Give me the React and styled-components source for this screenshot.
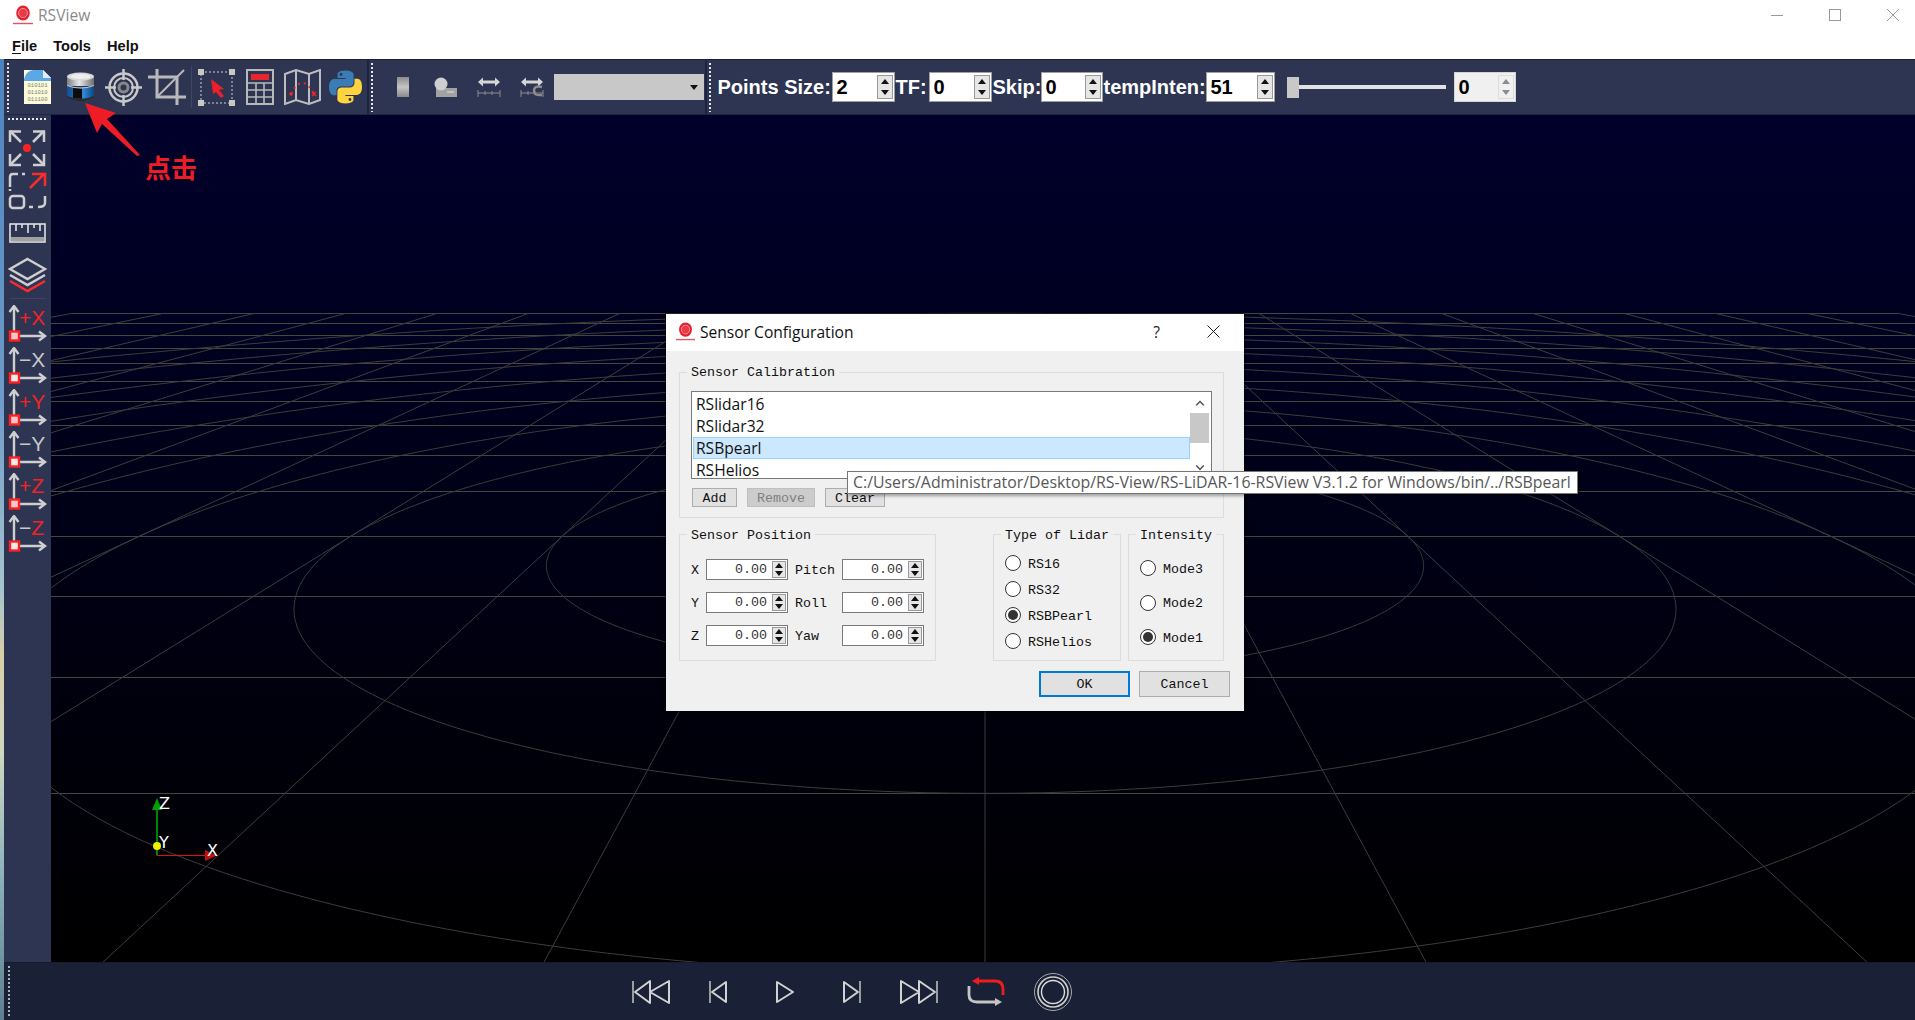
import React from "react";
import styled, { createGlobalStyle } from "styled-components";

const Global = createGlobalStyle`
  html, body { margin: 0; padding: 0; width: 1915px; height: 1020px; overflow: hidden; background: #fff; }
  #root { width: 1915px; height: 1020px; }
  * { box-sizing: border-box; }
`;

const Page = styled.div`
  position: relative; width: 1915px; height: 1020px; display: flex; flex-direction: column; overflow: hidden;
  font-family: "Liberation Sans", Arial, sans-serif;
`;
const TitleBar = styled.div`
  height: 30px; display: flex; align-items: center; padding-left: 13px; background: #fff;
`;
const AppName = styled.span`
  margin-left: 5px; font: 15.6px "Open Sans", sans-serif; color: #8a8a8a;
`;
const WindowButtons = styled.div`margin-left: auto; margin-right: -7px; display: flex;`;
const WindowButton = styled.div`
  width: 58px; height: 30px; display: flex; align-items: center; justify-content: center;
`;
const MenuBar = styled.div`
  height: 29px; display: flex; align-items: center; padding: 3px 0 0 12px; gap: 16px; background: #fff;
`;
const MenuItem = styled.span`
  font: bold 14.6px "Liberation Sans", sans-serif; color: #111;
  u { text-decoration-thickness: 1px; text-underline-offset: 2px; }
`;
const Body = styled.div`flex: 1; display: flex; min-height: 0;`;
const WallStrip = styled.div`
  width: 4px;
  background: linear-gradient(180deg, #4d83bd 0, #6d9bc9 35%, #a7c3cf 55%, #d9cfa8 62%, #cfd7c0 72%, #8db1bb 85%, #5d7f90 100%);
`;
const Main = styled.div`flex: 1; display: flex; flex-direction: column; min-width: 0;`;
const Toolbar = styled.div`
  height: 56px; display: flex; align-items: center; background: #2d3553;
  border-top: 1px solid #1c2238; border-bottom: 1px solid #1f2640;
`;
const HandleV = styled.div`
  width: 2px; height: 49px; margin: 0 ${(p) => p.$r || 0}px 0 ${(p) => p.$l || 0}px;
  background: repeating-linear-gradient(180deg, #e8e8e8 0 2px, transparent 2px 4px);
`;
const BreakLine = styled.div`width: 2px; height: 54px; background: #1d2440; margin-left: ${(p) => p.$l || 0}px;`;
const Sep = styled.div`width: 1px; height: 42px; background: #3d4663; margin: 0 3px;`;
const IconSlot = styled.div`
  width: ${(p) => p.$w || 43}px; height: 54px; display: flex; align-items: center; justify-content: center; flex: none;
`;
const Combo = styled.div`
  width: 150px; height: 26px; background: #c8c8c8; display: flex; align-items: center; justify-content: flex-end; padding-right: 6px;
  &::after { content: ""; border-left: 4px solid transparent; border-right: 4px solid transparent; border-top: 5px solid #111; }
`;
const BarLabel = styled.span`
  width: ${(p) => p.$w}px; flex: none; white-space: nowrap; color: #fff;
  font: bold 20px "Liberation Sans", sans-serif;
`;
const SpinBox = styled.div`
  width: ${(p) => p.$w}px; height: 30px; flex: none; display: flex; margin-right: 1px;
  background: ${(p) => (p.$off ? "#f0f0f0" : "#fff")};
  border: 1px solid ${(p) => (p.$off ? "#d4d4d4" : "#a0a0a0")};
`;
const SpinValue = styled.span`
  flex: 1; padding-left: 4px; font: bold 20px/28px "Liberation Sans", sans-serif; color: #000;
`;
const SpinArrows = styled.div`
  width: ${(p) => p.$w || 16}px; margin: ${(p) => (p.$small ? "1px 1px 1px 0" : "2px 1px 2px 0")}; display: flex; flex-direction: column; flex: none;
  border: 1px solid ${(p) => (p.$off ? "#dcdcdc" : "#9a9a9a")};
  background: ${(p) => (p.$off ? "#f0f0f0" : "#e6e6e6")};
`;
const Arrow = styled.div`
  flex: 1; display: flex; align-items: center; justify-content: center;
  &::after {
    content: ""; border-left: 4px solid transparent; border-right: 4px solid transparent;
    ${(p) => (p.$down ? "border-top" : "border-bottom")}: 5px solid ${(p) => (p.$off ? "#8c8c8c" : "#111")};
  }
`;
const SliderWrap = styled.div`display: flex; align-items: center; margin: 0 8px 0 11px; flex: none;`;
const SliderHandle = styled.div`width: 12px; height: 21px; background: #c8c8c8;`;
const SliderTrack = styled.div`width: 147px; height: 4px; background: #e2e2e2;`;
const Middle = styled.div`flex: 1; display: flex; min-height: 0;`;
const SideBar = styled.div`
  width: 47px; flex: none; background: #2d3553; display: flex; flex-direction: column; align-items: center;
`;
const HandleH = styled.div`
  width: 40px; height: 2px; margin: 3px 0 10px;
  background: repeating-linear-gradient(90deg, #e8e8e8 0 2px, transparent 2px 4px);
`;
const SideIcon = styled.svg`display: block; flex: none; width: 47px; height: ${(p) => p.$h}px;`;
const SideSep = styled.div`width: 36px; height: 1px; background: #3b4462; margin: 1px 0 6px; flex: none;`;
const Viewport = styled.div`
  flex: 1; min-width: 0; background: linear-gradient(180deg, #00002b 0%, #000 100%);
`;
const ViewSvg = styled.svg`display: block; width: 100%; height: 100%;`;
const BottomBar = styled.div`
  height: 58px; flex: none; display: flex; align-items: center; background: #1a2035; border-top: 1px solid #151a2c;
`;
const BottomHandle = styled(HandleV)`height: 52px; margin: 0 607.5px 0 4px; background: repeating-linear-gradient(180deg, #aeb2bd 0 2px, transparent 2px 4px);`;
const PlaySlot = styled.div`width: 67px; height: 58px; display: flex; align-items: center; justify-content: center; flex: none;`;

const Dialog = styled.div`
  position: absolute; left: 666px; top: 314px; width: 578px; height: 397px; background: #f0f0f0;
  box-shadow: 0 0 0 1px rgba(0,0,0,.45), 0 2px 8px rgba(0,0,0,.4);
  display: flex; flex-direction: column;
`;
const DialogHead = styled.div`
  height: 37px; background: #fff; display: flex; align-items: center; padding: 0 0 2px 10px; flex: none;
`;
const DialogTitle = styled.span`
  margin-left: 5px; font: 15.6px "Open Sans", sans-serif; color: #111;
`;
const HelpMark = styled.span`
  margin-left: auto; width: 15px; text-align: center; font: 15.6px "Open Sans", sans-serif; color: #222;
`;
const CloseBox = styled.div`margin: 0 24px 0 43px; display: flex;`;
const DialogBody = styled.div`
  flex: 1; display: flex; flex-direction: column; padding: 13px 14px 0 13px; gap: 8px;
`;
const Group = styled.fieldset`
  margin: 0 0 0 ${(p) => p.$ml || 0}px; min-width: 0; width: ${(p) => p.$w}px; height: ${(p) => p.$h}px; flex: none;
  border: 1px solid #dcdcdc; padding: ${(p) => p.$pt || 0}px 0 0 11px;
`;
const Legend = styled.legend`
  padding: ${(p) => p.$dy || 1}px 4px 0; margin-left: -4px; height: 16px;
  font: 13.33px/16px "Liberation Mono", monospace; color: #111;
`;
const ListBox = styled.div`
  width: 521px; height: 88px; background: #fff; border: 1px solid #7a7a7a; display: flex; overflow: hidden;
`;
const ListItems = styled.div`width: 498px; flex: none; padding: 1px 0 0 1px; display: flex; flex-direction: column;`;
const ListItem = styled.div`
  height: 22px; flex: none; padding-left: 2px; font: 15.6px/20px "Open Sans", sans-serif; color: #111;
  border: 1px solid ${(p) => (p.$on ? "#99d1ff" : "transparent")};
  background: ${(p) => (p.$on ? "#cce8ff" : "transparent")};
`;
const ScrollBar = styled.div`width: 19px; flex: none; display: flex; flex-direction: column; align-items: center;`;
const ScrollThumb = styled.div`width: 19px; height: 32px; background: #c8c8c8; margin: 1px 0 15px;`;
const ScrollArrow = styled.svg`display: block; width: 12px; height: 21px;`;
const ButtonRow = styled.div`display: flex; gap: 10px; margin: 9px 0 0 1px;`;
const FlatButton = styled.div`
  width: ${(p) => p.$w}px; height: ${(p) => p.$h || 19}px; display: flex; align-items: center; justify-content: center;
  padding-top: 1px;
  font: 13.33px "Liberation Mono", monospace; color: ${(p) => (p.$off ? "#808080" : "#111")};
  background: ${(p) => (p.$off ? "#cccccc" : "#e1e1e1")};
  border: ${(p) => (p.$primary ? "2px solid #0078d7" : `1px solid ${p.$off ? "#bfbfbf" : "#adadad"}`)};
`;
const GroupRow = styled.div`display: flex; align-items: flex-start;`;
const PosRow = styled.div`display: flex; align-items: center; height: 21px; margin-bottom: 12px;`;
const PosLabel = styled.span`
  width: ${(p) => p.$w}px; margin-left: ${(p) => p.$l || 0}px; flex: none; padding-top: 2px;
  font: 13.33px "Liberation Mono", monospace; color: #111;
`;
const PosSpin = styled.div`
  width: ${(p) => p.$w}px; height: 21px; flex: none; display: flex; background: #fff; border: 1px solid #7a7a7a;
`;
const PosValue = styled.span`
  flex: 1; text-align: right; padding-right: 5px; font: 13.33px/20px "Liberation Mono", monospace; color: #333;
`;
const RadioRow = styled.div`display: flex; align-items: center; height: ${(p) => p.$h}px; gap: 7px;`;
const Radio = styled.div`
  width: 16px; height: 16px; flex: none; border-radius: 50%; background: #fff; border: 1px solid #333;
  display: flex; align-items: center; justify-content: center;
  &::after { content: ""; width: 10px; height: 10px; border-radius: 50%; background: ${(p) => (p.$on ? "#333" : "transparent")}; }
`;
const RadioText = styled.span`padding-top: 2px; font: 13.33px "Liberation Mono", monospace; color: #111;`;
const DialogFoot = styled.div`display: flex; justify-content: flex-end; gap: 9px; margin-top: 2px;`;
const Tip = styled.div`
  position: absolute; left: 847px; top: 471px; width: 731px; height: 23px; background: #fff; border: 1px solid #767676;
  box-shadow: 2px 2px 3px rgba(0,0,0,.35); padding-left: 5px; white-space: nowrap;
  font: 15.87px/20px "Open Sans", sans-serif; color: #575757;
`;
const Callout = styled.svg`position: absolute; left: 80px; top: 98px; width: 66px; height: 64px;`;
const CalloutText = styled.span`
  position: absolute; left: 145px; top: 150px; color: #ee1c25;
  font: bold 26px/34px "Noto Sans CJK SC", sans-serif;
`;

const Logo = ({ s = 20 }) => (
  <svg width={s} height={s} viewBox="0 0 20 20">
    <ellipse cx="10" cy="8" rx="6.8" ry="7.6" fill="#e5202e" />
    <ellipse cx="10" cy="8" rx="4.4" ry="4.6" fill="#e93b47" stroke="#f49aa0" strokeWidth=".9" />
    <rect x="0" y="17.8" width="20" height="1.4" fill="#e5525b" />
  </svg>
);

const G = "#c9c9c9";
const FileIcon = () => (
  <svg width="29" height="36" viewBox="0 0 29 36">
    <path d="M1 1H20L28 9V35H1Z" fill="#fdfcd9" />
    <path d="M1 10Q3 2 10 1H20V9H28V12H1Z" fill="#5aa9e6" />
    <path d="M20 1L28 9H20Z" fill="#dfeefa" />
    <text x="14.5" y="18" fontSize="5.6" textAnchor="middle" fontFamily="Liberation Mono" fill="#808080">010101</text>
    <text x="14.5" y="24.6" fontSize="5.6" textAnchor="middle" fontFamily="Liberation Mono" fill="#808080">011010</text>
    <text x="14.5" y="31.6" fontSize="5.6" textAnchor="middle" fontFamily="Liberation Mono" fill="#808080">011100</text>
  </svg>
);
const LidarIcon = () => (
  <svg width="29" height="31" viewBox="0 0 29 31">
    <defs>
      <linearGradient id="lt" x1="0" x2="1"><stop offset="0" stopColor="#7e7e7e" /><stop offset=".45" stopColor="#e8e8e8" /><stop offset="1" stopColor="#6e6e6e" /></linearGradient>
      <linearGradient id="lb" x1="0" x2="1"><stop offset="0" stopColor="#0f4f95" /><stop offset=".6" stopColor="#2f8ad8" /><stop offset="1" stopColor="#0d477f" /></linearGradient>
    </defs>
    <path d="M1 25Q14.5 33 28 25V21H1Z" fill="#2a2a2a" />
    <path d="M1 13Q14.5 18 28 13V24Q14.5 30 1 24Z" fill="url(#lb)" />
    <path d="M7 15.5L16 16.5V27L7 26Z" fill="#0c0c0c" />
    <rect x="1" y="4" width="27" height="10" fill="url(#lt)" />
    <path d="M1 13Q14.5 18 28 13V14Q14.5 19 1 14Z" fill="#c4c4c4" />
    <ellipse cx="14.5" cy="4.5" rx="13.5" ry="4" fill="#d8d8d8" />
    <ellipse cx="14.5" cy="4.5" rx="10" ry="2.6" fill="#eeeeee" />
  </svg>
);
const TargetIcon = () => (
  <svg width="37" height="37" viewBox="0 0 37 37" fill="none" stroke={G}>
    <circle cx="18.5" cy="18.5" r="14" strokeWidth="2.5" />
    <circle cx="18.5" cy="18.5" r="9.5" strokeWidth="2" />
    <circle cx="18.5" cy="18.5" r="4.5" strokeWidth="3" stroke="#888" />
    <path d="M18.5 0V11M18.5 26V37M0 18.5H11M26 18.5H37" strokeWidth="2.5" />
  </svg>
);
const CropIcon = () => (
  <svg width="38" height="36" viewBox="0 0 38 36" fill="none" stroke="#b9b9b9" strokeWidth="3">
    <path d="M0 8H29V36" /><path d="M9 0V28H38" /><path d="M9 28L36 1" strokeWidth="2" />
  </svg>
);
const SelectIcon = () => (
  <svg width="37" height="37" viewBox="0 0 37 37">
    <rect x="3" y="3" width="31" height="31" fill="none" stroke="#cfcfcf" strokeWidth="1" strokeDasharray="2 2" />
    <path d="M0 0h6v6H0zM31 0h6v6h-6zM0 31h6v6H0zM31 31h6v6h-6z" fill="#c8c8c8" />
    <path d="M13 10L26 20 21 21 26 27 23 29 18 23 15 25Z" fill="#ee2027" />
  </svg>
);
const CalcIcon = () => (
  <svg width="28" height="36" viewBox="0 0 28 36" fill="none" stroke="#b9b9b9" strokeWidth="2">
    <rect x="1" y="1" width="26" height="34" />
    <rect x="5" y="5" width="18" height="6" fill="#e8262d" stroke="none" />
    <path d="M1 14H27M1 21H27M1 28H27M10 14V35M18 14V35" strokeWidth="1.6" />
  </svg>
);
const MapIcon = () => (
  <svg width="37" height="36" viewBox="0 0 37 36" fill="none" stroke="#bdbdbd" strokeWidth="2">
    <path d="M1 5L12 1 25 5 36 1V31L25 35 12 31 1 35Z" />
    <path d="M12 1V31M25 5V35" />
    <path d="M7 25Q18 3 30 25" stroke="#e8262d" strokeWidth="2" strokeDasharray="2 4" />
    <circle cx="7" cy="25" r="1.8" fill="#e8262d" stroke="none" />
    <path d="M28 23l4 4m0-4l-4 4" stroke="#e8262d" strokeWidth="1.6" />
  </svg>
);
const PythonIcon = () => (
  <svg width="33" height="34" viewBox="0 0 110 110">
    <path fillRule="evenodd" fill="#3a7cb4" d="M54.92 0C26.86 0 28.6 12.17 28.6 12.17l.03 12.61h26.78v3.79H17.99S0 26.52 0 54.86c0 28.34 15.7 27.33 15.7 27.33h9.37V69.04s-.5-15.7 15.45-15.7h26.62s14.95.24 14.95-14.45V14.6S84.36 0 54.92 0zM40.11 8.49a4.82 4.82 0 1 1 0 9.64 4.82 4.82 0 0 1 0-9.64z" />
    <path fillRule="evenodd" fill="#ffd43f" d="M55.08 110c28.06 0 26.32-12.17 26.32-12.17l-.03-12.61H54.59v-3.79h37.42S110 83.48 110 55.14c0-28.34-15.7-27.33-15.7-27.33h-9.37v13.15s.5 15.7-15.45 15.7H42.86s-14.95-.24-14.95 14.45V95.4S25.64 110 55.08 110zm14.81-8.49a4.82 4.82 0 1 1 0-9.64 4.82 4.82 0 0 1 0 9.64z" />
  </svg>
);
const CylinderIcon = () => (
  <svg width="12" height="20" viewBox="0 0 12 20">
    <defs><linearGradient id="cy" x1="0" y1="0" x2="0" y2="1"><stop offset="0" stopColor="#8c8c8c" /><stop offset=".5" stopColor="#c4c4c4" /><stop offset="1" stopColor="#8a8a8a" /></linearGradient></defs>
    <rect width="12" height="20" fill="url(#cy)" />
  </svg>
);
const SphereIcon = () => (
  <svg width="24" height="20" viewBox="0 0 24 20">
    <rect x="2" y="11" width="21" height="9" fill="#a2a2a2" />
    <path d="M13 15H20" stroke="#e5e5e5" />
    <circle cx="7" cy="7" r="6.5" fill="#cfcfcf" />
  </svg>
);
const RulerArrowIcon = ({ hook }) => (
  <svg width="24" height="20" viewBox="0 0 24 20" fill="none">
    <path d="M3 5H21" stroke="#d6d6d6" strokeWidth="3" />
    <path d="M6 0.5L1 5 6 9.5ZM18 0.5L23 5 18 9.5Z" fill="#d6d6d6" />
    <path d="M1 16H23M1 13V20M8 14V18M15 14V18M23 13V20" stroke="#8c8c8c" strokeWidth="1" />
    {hook && <path d="M22 10Q14 8 14 14 14 19 22 18" stroke="#8d8d8d" strokeWidth="2.4" />}
  </svg>
);
const Spinner = ({ w, value, off }) => (
  <SpinBox $w={w} $off={off}>
    <SpinValue>{value}</SpinValue>
    <SpinArrows $off={off}><Arrow $off={off} /><Arrow $down $off={off} /></SpinArrows>
  </SpinBox>
);

const FitIcon = () => (
  <SideIcon $h={42} viewBox="0 0 47 42" fill="none" stroke="#cfcfcf" strokeWidth="2.5">
    <path d="M6 1L17 12M40 1L29 12M6 35L17 24M40 35L29 24" />
    <path d="M6 12V1.5H17M29 1.5H40V12M6 24V35H17M29 35H40V24" />
    <circle cx="23" cy="18" r="4" fill="#ff2020" stroke="none" />
  </SideIcon>
);
const ZoomIcon = () => (
  <SideIcon $h={43} viewBox="0 0 47 43" fill="none" stroke="#cfcfcf" strokeWidth="2.5">
    <path d="M6 15V5Q6 2 9 2H14M18 2H21M6 19V17" />
    <rect x="6" y="24" width="14" height="12" rx="3" />
    <path d="M25 35H29M34 35Q41 35 41 31V24" />
    <path d="M26 16L40 2M28 2H41V14" stroke="#ff2a2a" />
  </SideIcon>
);
const RulerIcon = () => (
  <SideIcon $h={36} viewBox="0 0 47 36">
    <rect x="6" y="9" width="35" height="18" fill="none" stroke="#e2e2e2" strokeWidth="1.6" />
    <rect x="7" y="22" width="33" height="4" fill="#a0a0a0" />
    <path d="M12 9V16M18 9V13M24 9V18M30 9V13M36 9V16" stroke="#e2e2e2" strokeWidth="1.6" />
  </SideIcon>
);
const LayersIcon = () => (
  <SideIcon $h={46} viewBox="0 0 47 46" fill="none" strokeWidth="2.4">
    <path d="M23.5 8L41 18 23.5 28 6 18Z" stroke="#cfcfcf" />
    <path d="M6 24L23.5 34 41 24" stroke="#cfcfcf" />
    <path d="M6 30L23.5 40 41 30" stroke="#ff2a2a" />
  </SideIcon>
);
const AxisIcon = ({ sign, axis, signRed, axisRed, pink }) => (
  <SideIcon $h={42} viewBox="0 0 47 42">
    <path d="M10 30V3M10 31H39" stroke="#cfcfcf" strokeWidth="2.4" fill="none" />
    <path d="M5.5 7L10 1 14.5 7M35 26.5L41 31 35 35.5" stroke="#cfcfcf" strokeWidth="2.4" fill="none" />
    <rect x="6" y="26.5" width="9" height="9" fill={pink ? "#ffc9c9" : "#ececec"} stroke="#ff2020" strokeWidth="2.4" />
    <text x="15" y="20" fontFamily="Liberation Sans" fontSize="21" fill={signRed ? "#f02424" : "#c8c8c8"}>
      {sign}<tspan fill={axisRed ? "#f02424" : "#c8c8c8"}>{axis}</tspan>
    </text>
  </SideIcon>
);

const PlayIcon = ({ children, w = 40 }) => (
  <svg width={w} height="40" viewBox={`0 0 ${w} 40`} fill="none" stroke="#d2d2d2" strokeWidth="2" strokeLinejoin="round">{children}</svg>
);

const YH = 144, A = 0.00154, B = 0.000336, KS = 0.539, CX = 985;
const yOf = (n) => YH + 1 / (A + B * n);
const xOf = (k, y) => CX + k * KS * (y - YH);
const gridLines = () => {
  const out = [];
  for (let n = -1; n <= 13; n++) {
    const y = Math.round(yOf(n)) + 0.5;
    const xa = Math.max(51, xOf(-10, y)), xb = Math.min(1915, xOf(10, y));
    out.push(<line key={"h" + n} x1={xa} x2={xb} y1={y} y2={y} stroke="#46463f" shapeRendering="crispEdges" />);
  }
  for (let k = -10; k <= 10; k++) {
    out.push(<line key={"v" + k} x1={xOf(k, yOf(13))} y1={yOf(13)} x2={xOf(k, 1400)} y2={1400} stroke="#3d3d3a" strokeWidth="1" />);
  }
  for (let r = 1; r <= 10; r++) {
    let d = "", pen = false;
    for (let i = 0; i <= 720; i++) {
      const t = (i / 720) * Math.PI * 2;
      const n = 3 + r * Math.sin(t), k = r * Math.cos(t);
      const den = A + B * n;
      if (den < 0.00045) { pen = false; continue; }
      const y = YH + 1 / den, x = CX + (k * KS) / den;
      d += `${pen ? "L" : "M"}${x.toFixed(1)} ${y.toFixed(1)}`;
      pen = true;
    }
    out.push(<path key={"r" + r} d={d} fill="none" stroke="#3d3d3a" strokeWidth="1" />);
  }
  return out;
};

const Row3 = [
  ["X", "Pitch"],
  ["Y", "Roll"],
  ["Z", "Yaw"],
];

export default function App() {
  return (
    <Page>
      <Global />
      <TitleBar>
        <Logo />
        <AppName>RSView</AppName>
        <WindowButtons>
          <WindowButton>
            <svg width="12" height="12" viewBox="0 0 12 12"><path d="M0 6.5H12" stroke="#9a9a9a" /></svg>
          </WindowButton>
          <WindowButton>
            <svg width="12" height="12" viewBox="0 0 12 12"><rect x=".5" y=".5" width="11" height="11" fill="none" stroke="#9a9a9a" /></svg>
          </WindowButton>
          <WindowButton>
            <svg width="12" height="12" viewBox="0 0 12 12"><path d="M0 0L12 12M12 0L0 12" stroke="#9a9a9a" /></svg>
          </WindowButton>
        </WindowButtons>
      </TitleBar>
      <MenuBar>
        <MenuItem><u>F</u>ile</MenuItem>
        <MenuItem>Tools</MenuItem>
        <MenuItem>Help</MenuItem>
      </MenuBar>
      <Body>
        <WallStrip />
        <Main>
          <Toolbar>
            <HandleV $l={3} $r={7} />
            <IconSlot $w={43}><FileIcon /></IconSlot>
            <IconSlot $w={43}><LidarIcon /></IconSlot>
            <IconSlot $w={43}><TargetIcon /></IconSlot>
            <IconSlot $w={43}><CropIcon /></IconSlot>
            <Sep />
            <IconSlot $w={43}><SelectIcon /></IconSlot>
            <IconSlot $w={43}><CalcIcon /></IconSlot>
            <IconSlot $w={43}><MapIcon /></IconSlot>
            <IconSlot $w={43}><PythonIcon /></IconSlot>
            <BreakLine />
            <HandleV $l={2} $r={8.5} />
            <IconSlot $w={43}><CylinderIcon /></IconSlot>
            <IconSlot $w={43}><SphereIcon /></IconSlot>
            <IconSlot $w={43}><RulerArrowIcon /></IconSlot>
            <IconSlot $w={43}><RulerArrowIcon hook /></IconSlot>
            <Combo />
            <BreakLine $l={1} />
            <HandleV $l={2} $r={7} />
            <BarLabel $w={114}>Points Size:</BarLabel>
            <Spinner w={63} value="2" />
            <BarLabel $w={33}>TF:</BarLabel>
            <Spinner w={63} value="0" />
            <BarLabel $w={48}>Skip:</BarLabel>
            <Spinner w={62} value="0" />
            <BarLabel $w={102}>tempInten:</BarLabel>
            <Spinner w={69} value="51" />
            <SliderWrap><SliderHandle /><SliderTrack /></SliderWrap>
            <Spinner w={62} value="0" off />
          </Toolbar>
          <Middle>
            <SideBar>
              <HandleH />
              <FitIcon />
              <ZoomIcon />
              <RulerIcon />
              <LayersIcon />
              <SideSep />
              <AxisIcon sign="+" axis="X" signRed axisRed pink />
              <AxisIcon sign="−" axis="X" />
              <AxisIcon sign="+" axis="Y" signRed axisRed pink />
              <AxisIcon sign="−" axis="Y" />
              <AxisIcon sign="+" axis="Z" signRed axisRed pink />
              <AxisIcon sign="−" axis="Z" axisRed />
            </SideBar>
            <Viewport>
              <ViewSvg viewBox="51 115 1864 847" preserveAspectRatio="none">
                {gridLines()}
                <line x1="157" y1="855.5" x2="157" y2="810" stroke="#00e000" strokeWidth="1.2" />
                <path d="M157 798L162 810H152Z" fill="#00a000" />
                <line x1="157" y1="855.5" x2="206" y2="855.5" stroke="#e01010" strokeWidth="1.2" />
                <path d="M217 855.5L205 850V861Z" fill="#c01010" />
                <circle cx="157" cy="846" r="4" fill="#f0f000" />
                <text x="159" y="809" fontFamily="DejaVu Sans" fontSize="16" fill="#fff">Z</text>
                <text x="159" y="848" fontFamily="DejaVu Sans" fontSize="16" fill="#fff">Y</text>
                <text x="207" y="856" fontFamily="DejaVu Sans" fontSize="16" fill="#fff">X</text>
              </ViewSvg>
            </Viewport>
          </Middle>
          <BottomBar>
            <BottomHandle />
            <PlaySlot>
              <PlayIcon>
                <path d="M2 9V31" stroke="#9c9c9c" /><path d="M4 20L19 9V31ZM19 20L38 9V31Z" />
              </PlayIcon>
            </PlaySlot>
            <PlaySlot>
              <PlayIcon w={20}>
                <path d="M2 9V31" stroke="#9c9c9c" /><path d="M4 20L18 10V30Z" />
              </PlayIcon>
            </PlaySlot>
            <PlaySlot>
              <PlayIcon w={20}><path d="M2 10L18 20 2 30Z" /></PlayIcon>
            </PlaySlot>
            <PlaySlot>
              <PlayIcon w={20}>
                <path d="M18 9V31" stroke="#9c9c9c" /><path d="M2 10L16 20 2 30Z" />
              </PlayIcon>
            </PlaySlot>
            <PlaySlot>
              <PlayIcon>
                <path d="M38 9V31" stroke="#9c9c9c" /><path d="M2 9L20 20 2 31ZM20 9L36 20 20 31Z" />
              </PlayIcon>
            </PlaySlot>
            <PlaySlot>
              <PlayIcon>
                <path d="M37 23V17Q37 9 29 9H11" stroke="#f01c1c" strokeWidth="2.8" />
                <path d="M6 9L13 5V13Z" fill="#f01c1c" stroke="none" />
                <path d="M3 14V23Q3 30 11 30H30" stroke="#c4c4c4" strokeWidth="2.8" />
                <path d="M36 30L29 26V34Z" fill="#c4c4c4" stroke="none" />
              </PlayIcon>
            </PlaySlot>
            <PlaySlot>
              <PlayIcon>
                <circle cx="20" cy="20" r="18.5" strokeWidth="1" stroke="#a8a8a8" />
                <circle cx="20" cy="20" r="15" strokeWidth="1.6" stroke="#cfcfcf" />
                <circle cx="20" cy="20" r="11.5" strokeWidth="1.4" stroke="#dedede" />
              </PlayIcon>
            </PlaySlot>
          </BottomBar>
        </Main>
      </Body>

      <Callout viewBox="80 98 66 64">
        <path d="M85 103L116 113 107 119 140 155 137 156 102 124 97 133Z" fill="#ee1c25" />
      </Callout>
      <CalloutText>点击</CalloutText>

      <Dialog>
        <DialogHead>
          <Logo s={19} />
          <DialogTitle>Sensor Configuration</DialogTitle>
          <HelpMark>?</HelpMark>
          <CloseBox>
            <svg width="13" height="13" viewBox="0 0 13 13"><path d="M.5.5L12.5 12.5M12.5.5L.5 12.5" stroke="#222" /></svg>
          </CloseBox>
        </DialogHead>
        <DialogBody>
          <Group $w={545} $h={154} $pt={11}>
            <Legend>Sensor Calibration</Legend>
            <ListBox>
              <ListItems>
                <ListItem>RSlidar16</ListItem>
                <ListItem>RSlidar32</ListItem>
                <ListItem $on>RSBpearl</ListItem>
                <ListItem>RSHelios</ListItem>
              </ListItems>
              <ScrollBar>
                <ScrollArrow viewBox="0 0 12 21" fill="none" stroke="#555" strokeWidth="1.6"><path d="M2 14L6 10 10 14" /></ScrollArrow>
                <ScrollThumb />
                <ScrollArrow viewBox="0 0 12 21" fill="none" stroke="#555" strokeWidth="1.6"><path d="M2 8L6 12 10 8" /></ScrollArrow>
              </ScrollBar>
            </ListBox>
            <ButtonRow>
              <FlatButton $w={45}>Add</FlatButton>
              <FlatButton $w={68} $off>Remove</FlatButton>
              <FlatButton $w={60}>Clear</FlatButton>
            </ButtonRow>
          </Group>
          <GroupRow>
            <Group $w={257} $h={135} $pt={17}>
              <Legend $dy={2}>Sensor Position</Legend>
              {Row3.map(([a, b]) => (
                <PosRow key={a}>
                  <PosLabel $w={15}>{a}</PosLabel>
                  <PosSpin $w={82}>
                    <PosValue>0.00</PosValue>
                    <SpinArrows $w={14} $small><Arrow /><Arrow $down /></SpinArrows>
                  </PosSpin>
                  <PosLabel $w={47} $l={7}>{b}</PosLabel>
                  <PosSpin $w={82}>
                    <PosValue>0.00</PosValue>
                    <SpinArrows $w={14} $small><Arrow /><Arrow $down /></SpinArrows>
                  </PosSpin>
                </PosRow>
              ))}
            </Group>
            <Group $w={128} $h={135} $pt={8} $ml={57}>
              <Legend $dy={2}>Type of Lidar</Legend>
              {[["RS16"], ["RS32"], ["RSBPearl", true], ["RSHelios"]].map(([t, on]) => (
                <RadioRow key={t} $h={26}><Radio $on={on} /><RadioText>{t}</RadioText></RadioRow>
              ))}
            </Group>
            <Group $w={96} $h={135} $pt={9} $ml={7}>
              <Legend $dy={2}>Intensity</Legend>
              {[["Mode3"], ["Mode2"], ["Mode1", true]].map(([t, on]) => (
                <RadioRow key={t} $h={34.5}><Radio $on={on} /><RadioText>{t}</RadioText></RadioRow>
              ))}
            </Group>
          </GroupRow>
          <DialogFoot>
            <FlatButton $w={91} $h={26} $primary>OK</FlatButton>
            <FlatButton $w={91} $h={26}>Cancel</FlatButton>
          </DialogFoot>
        </DialogBody>
      </Dialog>
      <Tip>C:/Users/Administrator/Desktop/RS-View/RS-LiDAR-16-RSView V3.1.2 for Windows/bin/../RSBpearl</Tip>
    </Page>
  );
}
